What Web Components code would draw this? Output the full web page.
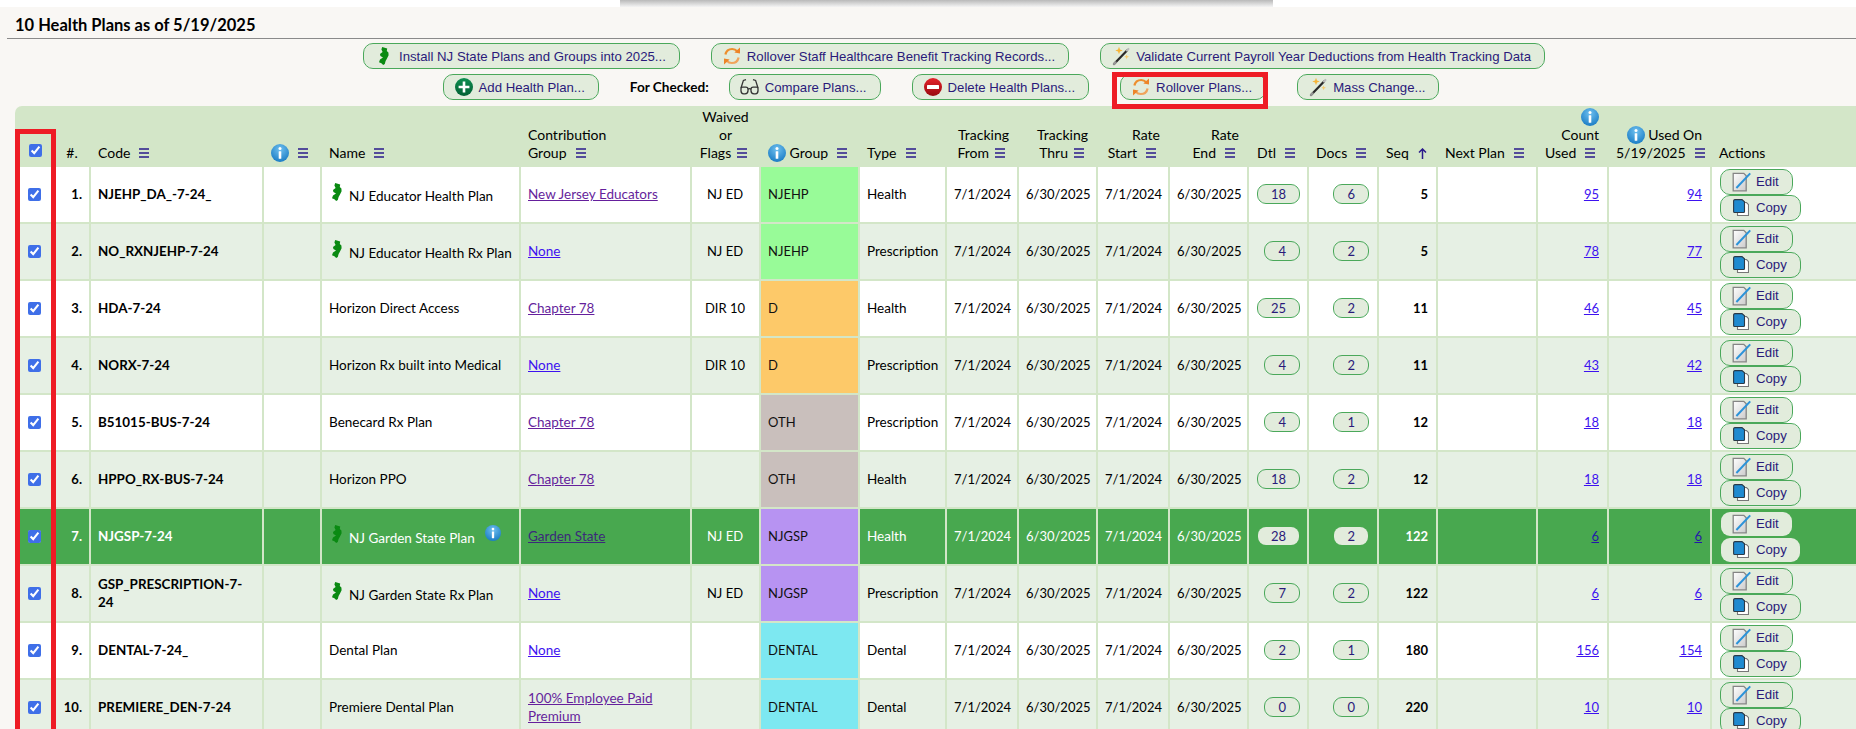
<!DOCTYPE html>
<html lang="en">
<head>
<meta charset="utf-8">
<title>Health Plans</title>
<style>
  html, body { margin: 0; padding: 0; height: 729px; overflow: hidden; background: #f9f7f4; }
  body { font-family: Lato, "Liberation Sans", sans-serif; color: #000; }
</style>
</head>
<body>
<plans-page></plans-page>
<script>
'use strict';

const ICONS = {
  nj: `<svg viewBox="0 0 10 18" width="10" height="18"><path fill="#0a8a12" d="M3.2 0 8.2 1.6 7.8 4l1.6 1.4.2 2.8-1.6 3.2-1.4 2.6-.8 3L4.2 18 2.4 16.2 0 15.2l1-2.6 3-2.2-2.6-1.4L1 7l2.6-2L2.4 2.6z"/></svg>`,
  add: `<svg viewBox="0 0 18 18" width="18" height="18"><defs><linearGradient id="a" x1="0" y1="0" x2="0" y2="1"><stop offset="0" stop-color="#0f8f52"/><stop offset="1" stop-color="#035f33"/></linearGradient></defs><circle cx="9" cy="9" r="9" fill="url(#a)"/><path d="M9 3.6v10.8M3.6 9h10.8" stroke="#fff" stroke-width="2.6"/></svg>`,
  del: `<svg viewBox="0 0 18 18" width="18" height="18"><defs><linearGradient id="d" x1="0" y1="0" x2="0" y2="1"><stop offset="0" stop-color="#e5232b"/><stop offset="1" stop-color="#98090f"/></linearGradient></defs><circle cx="9" cy="9" r="9" fill="url(#d)"/><rect x="3" y="7" width="12" height="4" rx=".6" fill="#fff"/></svg>`,
  rollover: `<svg viewBox="0 0 18 20" width="18" height="20" fill="none"><path d="M2.4 8.6C3.2 4.8 6 3 9.2 3c2.2 0 3.8.9 5 2.2" stroke="#ed8f2e" stroke-width="2.2"/><path d="M11.4 6.6 17 7.4V1.6z" fill="#ed8428"/><path d="M15.6 11.4c-.8 3.8-3.6 5.6-6.8 5.6-2.2 0-3.8-.9-5-2.2" stroke="#f0a45c" stroke-width="2.2"/><path d="M6.6 13.4 1 12.6v5.8z" fill="#ed8428"/></svg>`,
  wand: `<svg viewBox="0 0 18 20" width="18" height="20"><path d="M2 18 15 4.5" stroke="#2a2a2a" stroke-width="2.2" stroke-linecap="round"/><path d="M15 4.5 16.4 3" stroke="#bbb" stroke-width="2.2" stroke-linecap="round"/><path d="M2 18 3.6 16.3" stroke="#999" stroke-width="2.2" stroke-linecap="round"/><path d="M7 .8l1 2.7 2.7 1-2.7 1-1 2.7-1-2.7-2.7-1 2.7-1z" fill="#f5b53a"/><path d="M14.6 8.4l.7 1.7 1.7.7-1.7.7-.7 1.7-.7-1.7-1.7-.7 1.7-.7z" fill="#f7cd72"/></svg>`,
  glasses: `<svg viewBox="0 0 19 18" width="19" height="18" fill="none" stroke="#333" stroke-width="1.3"><path d="M1 10 3.4 2.4 6 1.6M18 10 15.6 2.4 13 1.6"/><path d="M1 10.2c0-.6.6-1 1.4-1h3.4c1.4 0 2.2.8 2.2 2v1.6c0 2-1.2 3-3 3H3.6c-1.6 0-2.6-1.2-2.6-3zM18 10.2c0-.6-.6-1-1.4-1h-3.4c-1.4 0-2.2.8-2.2 2v1.6c0 2 1.2 3 3 3h1.4c1.6 0 2.6-1.2 2.6-3z"/><path d="M8 11.2c1-.8 2-.8 3 0"/></svg>`,
  edit: `<svg viewBox="0 0 19 20" width="19" height="20"><defs><linearGradient id="e" x1="0" y1="0" x2="1" y2="1"><stop offset="0" stop-color="#fff"/><stop offset="1" stop-color="#cbcbcb"/></linearGradient></defs><path d="M1.2 1.4h10.6l2.4 2.4v15H1.2z" fill="url(#e)" stroke="#858585" stroke-width="1.3"/><path d="M4.4 16 18.2 1.4" stroke="#2b93d9" stroke-width="2"/></svg>`,
  copy: `<svg viewBox="0 0 16 17" width="16" height="17"><path d="M4.5 3.5h9l2 2v11h-11z" fill="#fff" stroke="#777" stroke-width="1.1"/><path d="M.6 2C.6 1 1.2.6 2 .6h7l2.5 2.2v9.7c0 .6-.4 1-1 1H1.6c-.6 0-1-.4-1-1z" fill="#1f8ad0" stroke="#2b3a48" stroke-width="1.1"/></svg>`,
  info: `<svg viewBox="0 0 18 18" width="100%" height="100%"><defs><radialGradient id="i" cx=".5" cy=".3" r=".8"><stop offset="0" stop-color="#6fc0ef"/><stop offset="1" stop-color="#0f73bf"/></radialGradient></defs><circle cx="9" cy="9" r="9" fill="url(#i)"/><circle cx="9" cy="4.6" r="1.5" fill="#fff"/><rect x="7.7" y="7.2" width="2.6" height="7.6" rx=".5" fill="#fff"/></svg>`,
  sort: `<svg viewBox="0 0 10 10" width="10" height="10"><path d="M0 1h10M0 5h10M0 9h10" stroke="#2a1a8a" stroke-width="1.6"/></svg>`,
  up: `<svg viewBox="0 0 9 11" width="9" height="11" fill="none" stroke="#2a1a8a" stroke-width="1.5"><path d="M4.5 11V1M1 4.5 4.5 1 8 4.5"/></svg>`
};

class AppIcon extends HTMLElement {
  static get observedAttributes () {
    return ['name'];
  }

  constructor () {
    super();
    this.attachShadow({ mode: 'open' });
  }

  attributeChangedCallback () {
    this.render();
  }

  connectedCallback () {
    this.render();
  }

  render () {
    const size = this.getAttribute('size');
    this.shadowRoot.innerHTML = `
      <style>
        :host { display: inline-flex; align-items: center; justify-content: center; flex: none; vertical-align: middle; ${size ? `width:${size}px;height:${size}px;` : ''} }
      </style>${ICONS[this.getAttribute('name')] || ''}`;
  }
}

const $$toolButtonTemplate = document.createElement('template');
$$toolButtonTemplate.innerHTML = `
<style>
  :host { display: inline-flex; }
  .tool-button {
    align-items: center;
    background-clip: padding-box;
    background-color: #e2ecdc;
    border: 1px solid #4aa85a;
    border-radius: 10px;
    box-sizing: border-box;
    color: #2a1a7a;
    display: inline-flex;
    font: 13.2px "Liberation Sans", Arial, sans-serif;
    gap: 6px;
    height: 26px;
    padding: 0 13px 0 11px;
    white-space: nowrap;
  }
  :host([bare]) .tool-button { border-color: transparent; }
  .tool-button__icon { display: flex; justify-content: center; width: 18px; }
</style>
<span class="tool-button"><span class="tool-button__icon"><app-icon></app-icon></span><slot></slot></span>
`;

class ToolButton extends HTMLElement {
  constructor () {
    super();
    this.attachShadow({ mode: 'open' });
    this.shadowRoot.appendChild($$toolButtonTemplate.content.cloneNode(true));
  }

  connectedCallback () {
    this.shadowRoot.querySelector('app-icon').setAttribute('name', this.getAttribute('icon'));
  }
}

const $$countPillTemplate = document.createElement('template');
$$countPillTemplate.innerHTML = `
<style>
  :host {
    background-clip: padding-box;
    background-color: #e2ecdc;
    border: 1px solid #4aa85a;
    border-radius: 9px;
    box-sizing: border-box;
    color: #2a1a7a;
    display: inline-block;
    font: 13px/18px Lato, sans-serif;
    height: 20px;
    min-width: 35px;
    padding: 0 13px;
    text-align: center;
  }
  :host([bare]) { border-color: transparent; }
</style>
<slot></slot>
`;

class CountPill extends HTMLElement {
  constructor () {
    super();
    this.attachShadow({ mode: 'open' });
    this.shadowRoot.appendChild($$countPillTemplate.content.cloneNode(true));
  }
}

const $$toolbarTemplate = document.createElement('template');
$$toolbarTemplate.innerHTML = `
<style>
  :host { display: flex; gap: 31px; align-items: center; justify-content: center; height: 26px; }
</style>
<slot></slot>
`;

class PlanToolbar extends HTMLElement {
  constructor () {
    super();
    this.attachShadow({ mode: 'open' });
    this.shadowRoot.appendChild($$toolbarTemplate.content.cloneNode(true));
  }
}

const COLUMNS = [36, 34, 171, 56, 197, 169, 67, 97, 85, 70, 77, 70, 77, 58, 68, 57, 98, 69, 101, 148];

const GROUP_COLORS = {
  NJEHP: '#98fb98',
  D: '#fdc969',
  OTH: '#c9bfbc',
  NJGSP: '#b793f2',
  DENTAL: '#7de8f1'
};

const PLANS = [
  { code: 'NJEHP_DA_-7-24_', nj: true, name: 'NJ Educator Health Plan', contrib: 'New Jersey Educators', seen: true, flag: 'NJ ED', group: 'NJEHP', type: 'Health', dtl: 18, docs: 6, seq: 5, count: 95, used: 94 },
  { code: 'NO_RXNJEHP-7-24', nj: true, name: 'NJ Educator Health Rx Plan', contrib: 'None', flag: 'NJ ED', group: 'NJEHP', type: 'Prescription', dtl: 4, docs: 2, seq: 5, count: 78, used: 77 },
  { code: 'HDA-7-24', name: 'Horizon Direct Access', contrib: 'Chapter 78', seen: true, flag: 'DIR 10', group: 'D', type: 'Health', dtl: 25, docs: 2, seq: 11, count: 46, used: 45 },
  { code: 'NORX-7-24', name: 'Horizon Rx built into Medical', contrib: 'None', flag: 'DIR 10', group: 'D', type: 'Prescription', dtl: 4, docs: 2, seq: 11, count: 43, used: 42 },
  { code: 'B51015-BUS-7-24', name: 'Benecard Rx Plan', contrib: 'Chapter 78', seen: true, flag: '', group: 'OTH', type: 'Prescription', dtl: 4, docs: 1, seq: 12, count: 18, used: 18 },
  { code: 'HPPO_RX-BUS-7-24', name: 'Horizon PPO', contrib: 'Chapter 78', seen: true, flag: '', group: 'OTH', type: 'Health', dtl: 18, docs: 2, seq: 12, count: 18, used: 18 },
  { code: 'NJGSP-7-24', nj: true, name: 'NJ Garden State Plan', info: true, selected: true, contrib: 'Garden State', seen: true, flag: 'NJ ED', group: 'NJGSP', type: 'Health', dtl: 28, docs: 2, seq: 122, count: 6, used: 6 },
  { code: 'GSP_PRESCRIPTION-7-24', nj: true, name: 'NJ Garden State Rx Plan', contrib: 'None', flag: 'NJ ED', group: 'NJGSP', type: 'Prescription', dtl: 7, docs: 2, seq: 122, count: 6, used: 6 },
  { code: 'DENTAL-7-24_', name: 'Dental Plan', contrib: 'None', flag: '', group: 'DENTAL', type: 'Dental', dtl: 2, docs: 1, seq: 180, count: 156, used: 154 },
  { code: 'PREMIERE_DEN-7-24', name: 'Premiere Dental Plan', contrib: '100% Employee Paid Premium', seen: true, flag: '', group: 'DENTAL', type: 'Dental', dtl: 0, docs: 0, seq: 220, count: 10, used: 10 }
];

const SORT = '<app-icon class="sort" name="sort"></app-icon>';
const SORT_WIDE = '<app-icon class="sort wide" name="sort"></app-icon>';
const INFO = '<app-icon class="info-head" name="info" size="18"></app-icon>';

const $$tableTemplate = document.createElement('template');
$$tableTemplate.innerHTML = `
<style>
  :host { display: block; margin-left: 15px; width: 1845px; }
  table {
    background: #d3e6c8;
    border-collapse: separate;
    border-radius: 7px 0 0 0;
    border-spacing: 2px;
    font-size: 13px;
    line-height: 18px;
    table-layout: fixed;
    width: 1845px;
  }
  th {
    box-sizing: border-box;
    font-size: 14px;
    font-weight: 400;
    height: 57px;
    padding: 0 7px 3px;
    text-align: left;
    vertical-align: bottom;
    white-space: nowrap;
  }
  th.r { padding-right: 8px; text-align: right; }
  th.c { text-align: center; }
  th .sort { margin: 0 4px 0 6px; position: relative; top: -1px; }
  th .sort.wide { margin-left: 9px; }
  th.l .sort { margin: 0 0 0 9px; }
  th .info-head { vertical-align: top; }
  td {
    background: #fff;
    box-sizing: border-box;
    height: 55px;
    padding: 0 8px 1px 7px;
    vertical-align: middle;
  }
  tr:nth-child(even) td { background: #e6f0e4; }
  tr.selected td { background: #48a84f; color: #fff; }
  td.r { text-align: right; }
  td.c { text-align: center; }
  td.code, td.seq, td.num { font-weight: 700; }
  td.code { font-size: 13.4px; }
  td.num { padding-right: 7px; }
  td.group, tr.selected td.group, tr:nth-child(even) td.group { background: var(--group); color: #111; }
  td.plan, td.type, td.contrib { font-size: 13.5px; }
  td.actions { padding: 0 0 0 8px; }
  td.actions tool-button { display: flex; width: max-content; }
  input { accent-color: #3f6fe8; display: block; height: 13px; margin: 0 auto; width: 13px; }
  th input { margin-bottom: 5px; }
  a { color: #3d12f0; }
  a.seen { color: #651f9c; }
  tr.selected a { color: #2418a8; }
  tr.selected a.seen { color: #3b2a7a; }
  .name { align-items: flex-start; display: flex; gap: 7px; }
  .name span { padding-top: 4px; white-space: nowrap; }
  .name app-icon { margin-left: 3px; }
  .name .info { height: 16px; margin: 0 0 0 3px; width: 16px; }
  .stack { display: flex; flex-direction: column; }
</style>
<table>
  <colgroup></colgroup>
  <thead><tr>
    <th class="c"><input type="checkbox" checked></th>
    <th class="c">#.</th>
    <th class="l">Code${SORT}</th>
    <th class="l">${INFO}${SORT}</th>
    <th class="l">Name${SORT}</th>
    <th class="l">Contribution<br>Group${SORT}</th>
    <th class="c">Waived<br>or<br>Flags${SORT}</th>
    <th class="l">${INFO} Group${SORT}</th>
    <th class="l">Type${SORT}</th>
    <th class="r">Tracking<br>From${SORT}</th>
    <th class="r">Tracking<br>Thru${SORT}</th>
    <th class="r">Rate<br>Start${SORT_WIDE}</th>
    <th class="r">Rate<br>End${SORT_WIDE}</th>
    <th class="r">Dtl${SORT_WIDE}</th>
    <th class="r">Docs${SORT_WIDE}</th>
    <th class="r">Seq <app-icon class="sort" name="up"></app-icon></th>
    <th class="l">Next Plan${SORT}</th>
    <th class="r">${INFO}<br>Count<br>Used${SORT_WIDE}</th>
    <th class="r">${INFO} Used On<br>5/19/2025${SORT_WIDE}</th>
    <th class="l">Actions</th>
  </tr></thead>
  <tbody></tbody>
</table>
`;

class PlansTable extends HTMLElement {
  constructor () {
    super();
    this.attachShadow({ mode: 'open' });
    this.shadowRoot.appendChild($$tableTemplate.content.cloneNode(true));
  }

  connectedCallback () {
    this.shadowRoot.querySelector('colgroup').innerHTML = COLUMNS.map(w => `<col style="width:${w}px">`).join('');
    this.shadowRoot.querySelector('tbody').innerHTML = PLANS.map((plan, i) => this.renderRow(plan, i)).join('');
  }

  renderRow (plan, i) {
    const bare = plan.selected ? ' bare' : '';
    const icon = plan.nj ? '<app-icon name="nj"></app-icon>' : '';
    const name = plan.nj
      ? `<div class="name">${icon}<span>${plan.name}</span>${plan.info ? '<app-icon class="info" name="info"></app-icon>' : ''}</div>`
      : plan.name;
    return `<tr class="${plan.selected ? 'selected' : ''}">
      <td><input type="checkbox" checked></td>
      <td class="r num">${i + 1}.</td>
      <td class="code">${plan.code}</td>
      <td></td>
      <td class="plan">${name}</td>
      <td class="contrib"><a href="#" class="${plan.seen ? 'seen' : ''}">${plan.contrib}</a></td>
      <td class="c">${plan.flag}</td>
      <td class="group" style="--group:${GROUP_COLORS[plan.group]}">${plan.group}</td>
      <td class="type">${plan.type}</td>
      <td class="r">7/1/2024</td>
      <td class="r">6/30/2025</td>
      <td class="r">7/1/2024</td>
      <td class="r">6/30/2025</td>
      <td class="r" style="padding-right:7px"><count-pill${bare}>${plan.dtl}</count-pill></td>
      <td class="r"><count-pill${bare}>${plan.docs}</count-pill></td>
      <td class="r seq">${plan.seq}</td>
      <td></td>
      <td class="r"><a href="#">${plan.count}</a></td>
      <td class="r"><a href="#">${plan.used}</a></td>
      <td class="actions"><div class="stack">
        <tool-button icon="edit"${bare}>Edit</tool-button>
        <tool-button icon="copy"${bare}>Copy</tool-button>
      </div></td>
    </tr>`;
  }
}

const $$pageTemplate = document.createElement('template');
$$pageTemplate.innerHTML = `
<style>
  :host { display: block; position: relative; height: 729px; overflow: hidden; }
  .top-band { background: #fff; height: 7px; }
  .drop-shadow {
    background: linear-gradient(#b9b9b9, #f4f4f4);
    height: 7px;
    left: 620px;
    position: absolute;
    top: 0;
    width: 653px;
  }
  h1 {
    border-bottom: 1px solid #8a8a8a;
    box-sizing: border-box;
    font-size: 16.5px;
    font-weight: 700;
    height: 32px;
    line-height: 36px;
    margin: 0 0 4px 7px;
    padding-left: 8px;
  }
  plan-toolbar.first { margin-left: 52px; }
  plan-toolbar.second { margin: 5px 0 6px 26px; }
  .for-checked { font: 700 13.6px Lato, sans-serif; margin-right: -11px; }
  .red-frame { border: 5px solid #ee1c25; box-sizing: border-box; position: absolute; }
  .red-frame.checks { height: 640px; left: 15px; top: 129px; width: 41px; }
  .red-frame.rollover { height: 37px; left: 1112px; top: 72px; width: 156px; }
</style>
<div class="top-band"></div>
<div class="drop-shadow"></div>
<h1>10 Health Plans as of 5/19/2025</h1>
<plan-toolbar class="first">
  <tool-button icon="nj">Install NJ State Plans and Groups into 2025...</tool-button>
  <tool-button icon="rollover">Rollover Staff Healthcare Benefit Tracking Records...</tool-button>
  <tool-button icon="wand">Validate Current Payroll Year Deductions from Health Tracking Data</tool-button>
</plan-toolbar>
<plan-toolbar class="second">
  <tool-button icon="add">Add Health Plan...</tool-button>
  <span class="for-checked">For Checked:</span>
  <tool-button icon="glasses">Compare Plans...</tool-button>
  <tool-button icon="del">Delete Health Plans...</tool-button>
  <tool-button icon="rollover">Rollover Plans...</tool-button>
  <tool-button icon="wand">Mass Change...</tool-button>
</plan-toolbar>
<plans-table></plans-table>
<div class="red-frame checks"></div>
<div class="red-frame rollover"></div>
`;

class PlansPage extends HTMLElement {
  constructor () {
    super();
    this.attachShadow({ mode: 'open' });
    this.shadowRoot.appendChild($$pageTemplate.content.cloneNode(true));
  }
}

window.customElements.define('app-icon', AppIcon);
window.customElements.define('tool-button', ToolButton);
window.customElements.define('count-pill', CountPill);
window.customElements.define('plan-toolbar', PlanToolbar);
window.customElements.define('plans-table', PlansTable);
window.customElements.define('plans-page', PlansPage);
</script>
</body>
</html>
